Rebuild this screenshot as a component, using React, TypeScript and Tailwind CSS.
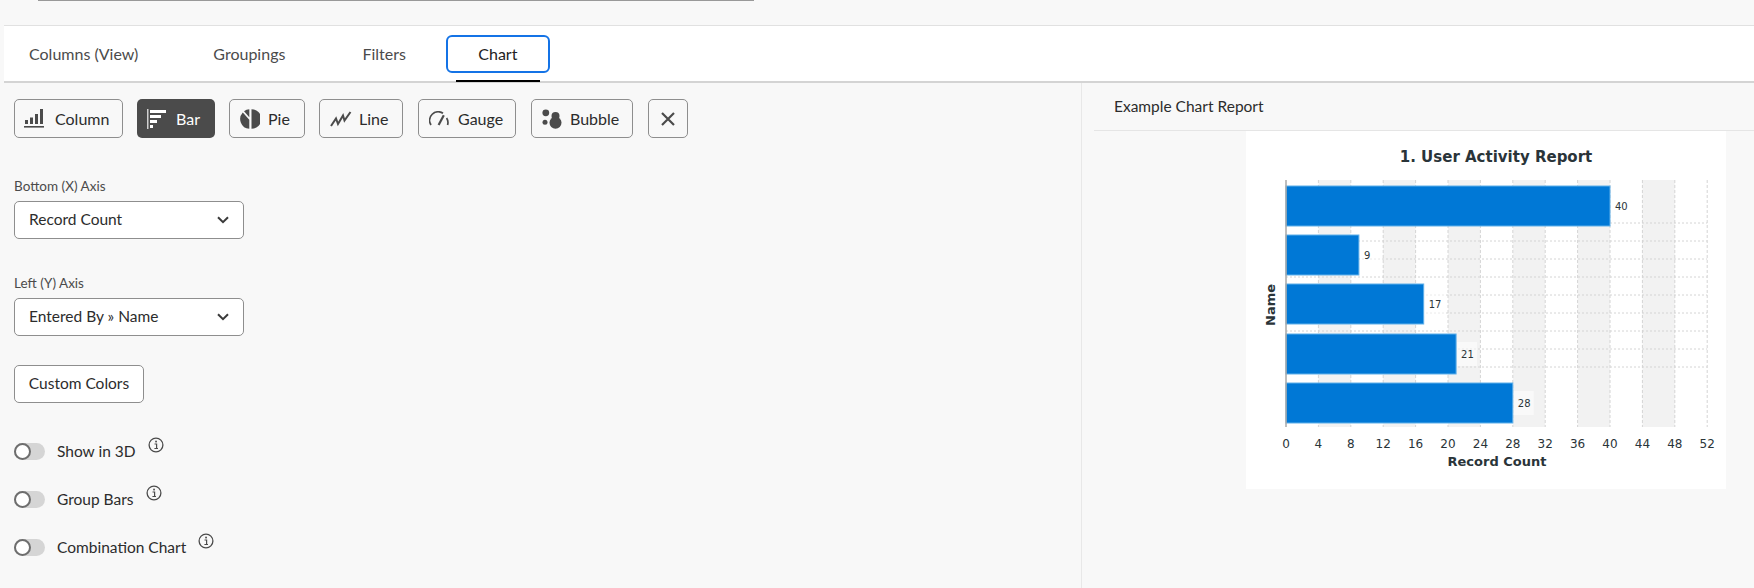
const font = { fontFamily: 'Lato, "Noto Sans", sans-serif' };

const tickValues = [0, 4, 8, 12, 16, 20, 24, 28, 32, 36, 40, 44, 48, 52];
const gridRows = [92, 110, 128, 146, 164, 182, 200, 218, 236];
const bars = [
  { value: 40, y: 55 },
  { value: 9, y: 104 },
  { value: 17, y: 153 },
  { value: 21, y: 203 },
  { value: 28, y: 252 },
];

const ColumnIcon = () => (
  <svg width="20" height="20" viewBox="0 0 20 20" fill="#4b4b4b">
    <rect x="1" y="11" width="3" height="4" />
    <rect x="6" y="8.5" width="3" height="6.5" />
    <rect x="11" y="5" width="3" height="10" />
    <rect x="16" y="0" width="3" height="15" />
    <rect x="0" y="17" width="20" height="1.6" />
  </svg>
);

const BarIcon = () => (
  <svg width="20" height="20" viewBox="0 0 20 20" fill="#ffffff">
    <rect x="0" y="0" width="1.5" height="20" fill="#d0d0d0" />
    <rect x="3" y="1" width="16" height="3" />
    <rect x="3" y="6" width="11" height="3" />
    <rect x="3" y="11" width="7" height="3" />
    <rect x="3" y="16" width="3" height="3" />
  </svg>
);

const PieIcon = () => (
  <svg width="20" height="20" viewBox="0 0 20 20" fill="#4b4b4b">
    <path d="M11.5 0.2A9.8 9.8 0 0 1 11.5 19.8Z" />
    <path d="M9.3 0.2V8.2L4 2.2A9.8 9.8 0 0 1 9.3 0.2Z" />
    <path d="M2.8 3.4L9.3 10.8V19.8A9.8 9.8 0 0 1 2.8 3.4Z" />
  </svg>
);

const LineIcon = () => (
  <svg width="22" height="20" viewBox="0 0 22 20" fill="none" stroke="#4b4b4b" strokeWidth="2" strokeLinejoin="miter">
    <path d="M1 17L6 9.5L8 15L13 6.5L14.5 11.5L20.5 3" />
  </svg>
);

const GaugeIcon = () => (
  <svg width="20" height="15" viewBox="0 0 20 15" fill="none" stroke="#4b4b4b">
    <path d="M2 14A8.6 8.6 0 0 1 14 2.2" strokeWidth="1.7" />
    <path d="M17.6 7A8.6 8.6 0 0 1 18.6 14" strokeWidth="1.7" />
    <path d="M9.6 14L14.8 4.2" strokeWidth="2.2" />
  </svg>
);

const BubbleIcon = () => (
  <svg width="20" height="20" viewBox="0 0 20 20" fill="#4b4b4b">
    <circle cx="3.8" cy="3.8" r="3.4" />
    <circle cx="3" cy="13.2" r="2.5" />
    <circle cx="13.5" cy="7" r="4" />
    <circle cx="13.5" cy="13.8" r="6" />
  </svg>
);

const CloseIcon = () => (
  <svg width="14" height="14" viewBox="0 0 14 14" fill="none" stroke="#4b4b4b" strokeWidth="2.2">
    <path d="M1 1L13 13M13 1L1 13" />
  </svg>
);

const Chevron = () => (
  <svg width="12" height="8" viewBox="0 0 12 8" fill="none" stroke="#3a3a3a" strokeWidth="2">
    <path d="M1 1.2L6 6.2L11 1.2" />
  </svg>
);

const InfoIcon = () => (
  <svg width="16" height="16" viewBox="0 0 16 16" fill="none">
    <circle cx="8" cy="8" r="6.9" stroke="#4b4b4b" strokeWidth="1.3" />
    <rect x="7.2" y="3.7" width="1.7" height="1.7" fill="#4b4b4b" />
    <path d="M6.5 7H8.6V11.2M6.4 11.5H10" stroke="#4b4b4b" strokeWidth="1.2" />
  </svg>
);

const chartTypes = [
  { label: 'Column', icon: <ColumnIcon />, width: 'w-[109px]', pad: 'pl-[9px] gap-[11px]' },
  { label: 'Bar', icon: <BarIcon />, width: 'w-[78px]', active: true, pad: 'pl-[10px] gap-[9px]' },
  { label: 'Pie', icon: <PieIcon />, width: 'w-[76px]', pad: 'pl-[10px] gap-[8px]' },
  { label: 'Line', icon: <LineIcon />, width: 'w-[84px]', pad: 'pl-[10px] gap-[7px]' },
  { label: 'Gauge', icon: <GaugeIcon />, width: 'w-[98px] ml-px', pad: 'pl-[10px] gap-[9px]' },
  { label: 'Bubble', icon: <BubbleIcon />, width: 'w-[102px] ml-px', pad: 'pl-[10px] gap-[8px]' },
];

const Toggle = ({ label, className }: { label: string; className: string }) => (
  <div className={`flex items-center h-[17px] ${className}`}>
    <div className="relative w-[31px] h-[17px] rounded-full bg-[#d5d5d5]">
      <div className="absolute left-0 top-0 w-[17px] h-[17px] rounded-full bg-white border-2 border-[#6e6e6e]" />
    </div>
    <span className="ml-[12px] text-[15.5px] leading-[17px] text-[#2c2c2c]">{label}</span>
    <span className="ml-[12px] -mt-[14px]">
      <InfoIcon />
    </span>
  </div>
);

const SelectBox = ({ label, value }: { label: string; value: string }) => (
  <div>
    <div className="text-[13.5px] leading-[18px] text-[#4b4b4b]">{label}</div>
    <div className="mt-[6px] w-[230px] h-[38px] rounded-[5px] border border-[#8e8e8e] bg-white pl-[14px] pr-[14px] flex items-center justify-between text-[15.5px] text-[#2c2c2c]">
      <span>{value}</span>
      <Chevron />
    </div>
  </div>
);

const ReportChart = () => {
  const x0 = 40;
  const step = 8.1;
  const top = 49;
  const bottom = 296;
  const xAt = (v: number) => x0 + v * step;
  const textColor = '#2a3439';
  return (
    <svg width="480" height="358" viewBox="0 0 480 358" style={{ fontFamily: '"DejaVu Sans", sans-serif' }}>
      {tickValues.slice(0, -1).map((v, i) =>
        i % 2 === 1 ? <rect key={v} x={xAt(v)} y={top} width={step * 4} height={bottom - top} fill="#f2f2f2" /> : null,
      )}
      {gridRows.map((y) => (
        <line key={y} x1={x0} x2={xAt(52)} y1={y} y2={y} stroke="#d4d4d4" strokeDasharray="2 2" />
      ))}
      {tickValues.slice(1).map((v) => (
        <line key={v} x1={xAt(v)} x2={xAt(v)} y1={top} y2={bottom} stroke="#d4d4d4" strokeDasharray="3 2" />
      ))}
      {bars.map((b) => (
        <g key={b.value}>
          <rect x={x0} y={b.y} width={b.value * step} height={40} fill="#0078d6" stroke="#5fb0ea" strokeWidth="1" />
          <rect x={xAt(b.value) + 1} y={b.y + 8} width={20} height={24} fill="#ffffff" fillOpacity="0.5" />
          <text x={xAt(b.value) + 5} y={b.y + 24} fontSize="10" fill={textColor}>
            {b.value}
          </text>
        </g>
      ))}
      <line x1={x0} x2={x0} y1={top} y2={bottom} stroke="#a8a8a8" strokeWidth="1.5" />
      {tickValues.map((v) => (
        <text key={v} x={xAt(v)} y={317} fontSize="12" textAnchor="middle" fill={textColor}>
          {v}
        </text>
      ))}
      <text x="250" y="31" fontSize="15" fontWeight="700" textAnchor="middle" fill={textColor}>
        1. User Activity Report
      </text>
      <text x="251" y="335" fontSize="13" fontWeight="700" textAnchor="middle" fill={textColor}>
        Record Count
      </text>
      <text x="0" y="0" fontSize="13" fontWeight="700" textAnchor="middle" fill={textColor} transform="translate(29 174) rotate(-90)">
        Name
      </text>
    </svg>
  );
};

export default function App() {
  return (
    <div className="w-[1754px] h-[588px] overflow-hidden bg-[#f8f8f8] flex flex-col" style={font}>
      <div className="h-[25px] shrink-0">
        <div className="ml-[38px] w-[716px] h-px bg-[#999999]" />
      </div>

      <div className="ml-[4px] h-[58px] shrink-0 bg-white border-t border-[#e1e1e1] border-b-2 border-b-[#d4d4d4] flex items-start pt-[9px] gap-[9px] text-[16px] text-[#4b4b4b]">
        <div className="h-[38px] px-[25px] mr-[7px] flex items-center">Columns (View)</div>
        <div className="h-[38px] px-[34px] flex items-center">Groupings</div>
        <div className="h-[38px] px-[34px] flex items-center">Filters</div>
        <div className="relative -ml-[3px] h-[38px] w-[104px] flex items-center justify-center rounded-[6px] border-2 border-[#1473e6] text-[#222222]">
          Chart
          <div className="absolute left-[8px] right-[8px] top-[43px] h-[2px] bg-black" />
        </div>
      </div>

      <div className="flex flex-1 min-h-0">
        <div className="w-[1078px] ml-[4px] shrink-0 border-r border-[#e8e8e8] pl-[10px] pt-[16px]">
          <div className="flex gap-[14px]">
            {chartTypes.map((t) => (
              <div
                key={t.label}
                className={`${t.width} ${t.pad} h-[39px] rounded-[5px] flex items-center text-[16px] ${
                  t.active ? 'bg-[#4b4b4b] text-white' : 'border border-[#8e8e8e] text-[#2c2c2c]'
                }`}
              >
                {t.icon}
                <span>{t.label}</span>
              </div>
            ))}
            <div className="ml-px w-[40px] h-[39px] rounded-[5px] border border-[#8e8e8e] flex items-center justify-center">
              <CloseIcon />
            </div>
          </div>

          <div className="mt-[39px]">
            <SelectBox label="Bottom (X) Axis" value="Record Count" />
          </div>
          <div className="mt-[35px]">
            <SelectBox label="Left (Y) Axis" value="Entered By » Name" />
          </div>

          <div className="mt-[29px] w-[130px] h-[38px] rounded-[5px] border border-[#8e8e8e] bg-white flex items-center justify-center text-[15.5px] text-[#2c2c2c]">
            Custom Colors
          </div>

          <Toggle label="Show in 3D" className="mt-[40px]" />
          <Toggle label="Group Bars" className="mt-[31px]" />
          <Toggle label="Combination Chart" className="mt-[31px]" />
        </div>

        <div className="flex-1 min-w-0 pl-[12px]">
          <div className="h-[48px] border-b border-[#e5e5e5] pl-[20px] flex items-center text-[15.5px] text-[#2c2c2c]">
            Example Chart Report
          </div>
          <div className="ml-[152px] w-[480px] bg-white">
            <ReportChart />
          </div>
        </div>
      </div>
    </div>
  );
}
